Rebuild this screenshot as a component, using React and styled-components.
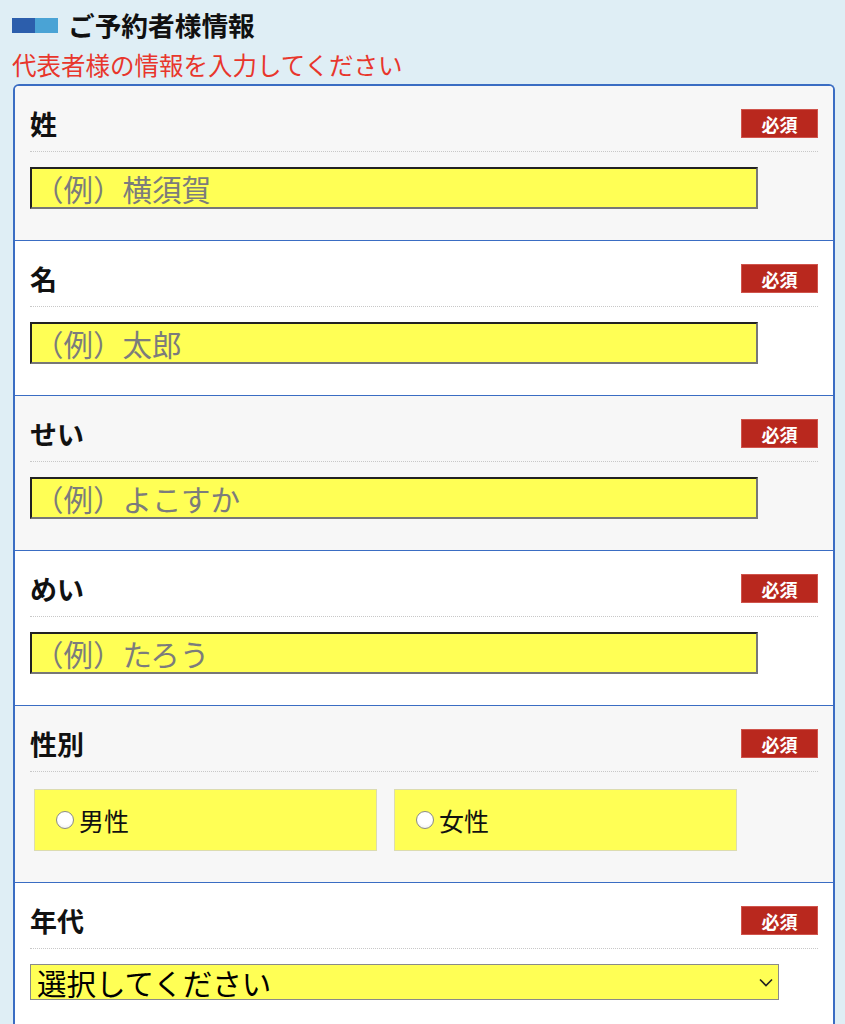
import React from "react";
import styled, { createGlobalStyle } from "styled-components";

const Global = createGlobalStyle`
  html, body { margin: 0; padding: 0; background: #dfeef5; }
  body { font-family: "Noto Sans CJK JP", "Noto Sans", sans-serif; color: #111; }
  * { box-sizing: border-box; }
`;

const Page = styled.div`
  padding: 10px 10px 0 12px;
`;

const Header = styled.div`
  display: flex;
  align-items: center;
  height: 30px;
`;

const Mark = styled.div`
  display: flex;
  width: 46px;
  height: 15px;
  margin-right: 10px;
`;

const MarkPart = styled.span`
  flex: 1;
  background: ${(p) => p.$c};
`;

const Title = styled.h2`
  margin: 0;
  font-size: 26.7px;
  line-height: 30px;
  font-weight: 700;
  color: #111;
`;

const Sub = styled.p`
  margin: 11px 0 0 0;
  font-size: 24.5px;
  line-height: 28px;
  color: #e8362c;
`;

const Card = styled.div`
  margin: 5px 0 0 1px;
  border: 2px solid #3a6dc3;
  border-bottom: none;
  border-radius: 6px 6px 0 0;
  overflow: hidden;
  background: #fff;
`;

const Section = styled.div`
  padding: 23px 15px 31px 15px;
  background: ${(p) => (p.$grey ? "#f7f7f7" : "#ffffff")};
  & + & { border-top: 1px solid #3a6dc3; }
`;

const Head = styled.div`
  display: flex;
  justify-content: space-between;
  align-items: center;
  height: 43px;
  padding-bottom: 13px;
  border-bottom: 1px dotted #c8c8c8;
`;

const Label = styled.div`
  font-size: 27px;
  font-weight: 700;
  line-height: 29px;
  color: #111;
`;

const Badge = styled.span`
  display: flex;
  align-items: center;
  justify-content: center;
  width: 77px;
  height: 29px;
  background: #b9281e;
  border: 1px solid #d0544c;
  color: #fff;
  font-size: 18px;
  font-weight: 700;
`;

const Body = styled.div`
  margin-top: 15px;
`;

const TextInput = styled.input`
  display: block;
  width: 728px;
  height: 42px;
  margin: 0;
  padding: 0 2px;
  background: #ffff55;
  border-style: solid;
  border-width: 2px;
  border-color: #222 #777 #777 #222;
  font-family: "Noto Sans CJK JP", sans-serif;
  font-size: 29.5px;
  color: #111;
  outline: none;
  &::placeholder { color: #7c7c7c; }
`;

const RadioRow = styled.div`
  display: flex;
  gap: 17px;
  padding: 2px 0 0 4px;
`;

const RadioBox = styled.label`
  display: flex;
  align-items: center;
  width: 343px;
  height: 62px;
  padding-left: 21px;
  background: #ffff55;
  border: 1px solid #dcdcb0;
  font-size: 25px;
  color: #111;
`;

const Radio = styled.input`
  appearance: none;
  width: 18px;
  height: 18px;
  margin: 0 5px 0 0;
  border-radius: 50%;
  border: 1px solid #8a8a8a;
  background: radial-gradient(circle at 50% 35%, #ffffff 55%, #e6e6e6 100%);
`;

const SelectWrap = styled.div`
  position: relative;
  width: 749px;
`;

const Select = styled.select`
  display: block;
  width: 100%;
  height: 36px;
  appearance: none;
  margin: 0;
  padding: 0 30px 0 6px;
  background: #ffff55;
  border: 1px solid #8a8a8a;
  border-radius: 0;
  font-family: "Noto Sans CJK JP", sans-serif;
  font-size: 29.5px;
  line-height: 34px;
  color: #000;
`;

const Chevron = styled.svg`
  position: absolute;
  right: 6px;
  top: 14px;
  pointer-events: none;
`;

const fields = [
  { label: "姓", ph: "（例）横須賀" },
  { label: "名", ph: "（例）太郎" },
  { label: "せい", ph: "（例）よこすか" },
  { label: "めい", ph: "（例）たろう" },
];

export default function App() {
  return (
    <Page>
      <Global />
      <Header>
        <Mark>
          <MarkPart $c="#2c5eac" />
          <MarkPart $c="#4aa3d5" />
        </Mark>
        <Title>ご予約者様情報</Title>
      </Header>
      <Sub>代表者様の情報を入力してください</Sub>
      <Card>
        {fields.map((f, i) => (
          <Section key={f.label} $grey={i % 2 === 0}>
            <Head>
              <Label>{f.label}</Label>
              <Badge>必須</Badge>
            </Head>
            <Body>
              <TextInput placeholder={f.ph} />
            </Body>
          </Section>
        ))}
        <Section $grey>
          <Head>
            <Label>性別</Label>
            <Badge>必須</Badge>
          </Head>
          <Body>
            <RadioRow>
              <RadioBox>
                <Radio type="radio" name="sex" />
                男性
              </RadioBox>
              <RadioBox>
                <Radio type="radio" name="sex" />
                女性
              </RadioBox>
            </RadioRow>
          </Body>
        </Section>
        <Section>
          <Head>
            <Label>年代</Label>
            <Badge>必須</Badge>
          </Head>
          <Body>
            <SelectWrap>
              <Select defaultValue="">
                <option value="">選択してください</option>
                <option>10代</option>
                <option>20代</option>
                <option>30代</option>
              </Select>
              <Chevron width="14" height="9" viewBox="0 0 14 9">
                <path d="M1 1.5 L7 7.5 L13 1.5" fill="none" stroke="#222" strokeWidth="1.6" />
              </Chevron>
            </SelectWrap>
          </Body>
        </Section>
      </Card>
    </Page>
  );
}
